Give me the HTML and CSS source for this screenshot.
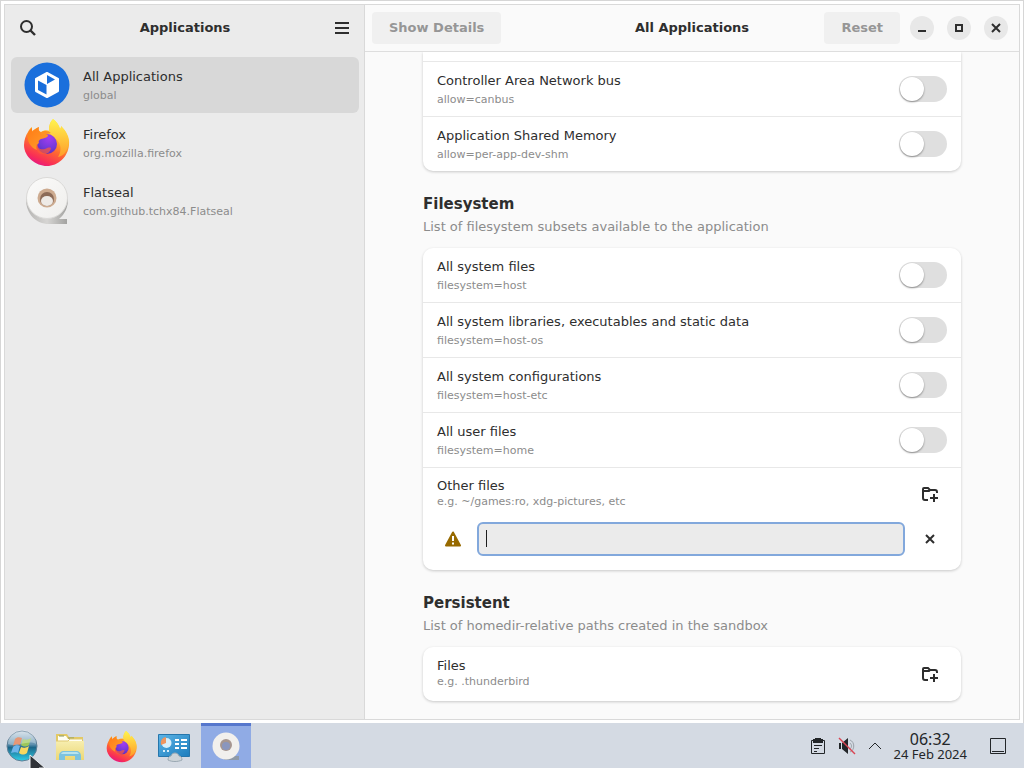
FILE: index.html
```html
<!DOCTYPE html>
<html lang="en">
<head>
    <meta charset="UTF-8">
    <meta name="viewport" content="width=device-width, initial-scale=1.0">
    <title>Flatseal</title>
    <link rel="stylesheet" href="styles.css">
</head>
<body>
    <!-- Shared icons -->
    <svg class="sprites" aria-hidden="true">
        <defs>
            <linearGradient id="foxBody" x1="0.75" y1="0" x2="0.3" y2="1">
                <stop offset="0" stop-color="#fff14a"/>
                <stop offset="0.35" stop-color="#ffb52b"/>
                <stop offset="0.6" stop-color="#ff6a30"/>
                <stop offset="0.85" stop-color="#f92f55"/>
                <stop offset="1" stop-color="#e31587"/>
            </linearGradient>
            <linearGradient id="foxHead" x1="0" y1="0" x2="1" y2="1">
                <stop offset="0" stop-color="#ff7a16"/>
                <stop offset="1" stop-color="#ffa02c"/>
            </linearGradient>
            <radialGradient id="foxGlobe" cx="0.6" cy="0.2" r="0.9">
                <stop offset="0" stop-color="#a23df0"/>
                <stop offset="0.6" stop-color="#7139d8"/>
                <stop offset="1" stop-color="#5b2bb0"/>
            </radialGradient>
            <linearGradient id="foxTail" x1="0" y1="0" x2="0" y2="1">
                <stop offset="0" stop-color="#fff44f"/>
                <stop offset="1" stop-color="#ff9c29"/>
            </linearGradient>
            <linearGradient id="orb" x1="0" y1="0" x2="0" y2="1">
                <stop offset="0" stop-color="#c9d7e2"/>
                <stop offset="0.45" stop-color="#5d8fae"/>
                <stop offset="0.55" stop-color="#1c6689"/>
                <stop offset="1" stop-color="#2fd0ea"/>
            </linearGradient>
            <linearGradient id="roll" x1="0" y1="0" x2="1" y2="1">
                <stop offset="0" stop-color="#fbfbfa"/>
                <stop offset="1" stop-color="#efeeec"/>
            </linearGradient>
            <linearGradient id="tape" x1="0" y1="0" x2="1" y2="0">
                <stop offset="0" stop-color="#b5b4b2"/>
                <stop offset="0.5" stop-color="#d6d5d3"/>
                <stop offset="1" stop-color="#a0a09e"/>
            </linearGradient>
            <linearGradient id="screen" x1="0" y1="0" x2="1" y2="1">
                <stop offset="0" stop-color="#5cb4e6"/>
                <stop offset="1" stop-color="#1d7dbd"/>
            </linearGradient>
            <linearGradient id="folder" x1="0" y1="0" x2="0" y2="1">
                <stop offset="0" stop-color="#f7eeb0"/>
                <stop offset="1" stop-color="#ecd774"/>
            </linearGradient>
        </defs>
        <symbol id="firefox" viewBox="0 0 48 48">
            <path fill="url(#foxBody)" d="M30 0c4 3 6 6 7 10 1-1 1-2 1-3 5 5 9 11 8 19-1 12-11 21-22 21S1 38 1 26c0-5 2-10 4-13 1-2 2-4 4-5v4c2-1 4-3 7-4-1 3 0 4 2 5 3-2 6-2 9-1-2-4 0-9 3-12z"/>
            <path fill="url(#foxTail)" d="M30 0c4 3 6 6 7 10 1-1 1-2 1-3 5 5 9 12 7 20-1 6-5 10-10 11 4-6 3-13-1-17-4-4-8-5-8-10 0-4 1-8 4-11z"/>
            <circle cx="24" cy="25" r="10" fill="url(#foxGlobe)"/>
            <path fill="url(#foxHead)" d="M5 14c1-2 2-4 4-5v4c2-2 4-4 7-5-1 3 0 5 3 6s5 1 6 2c0 3-4 3-7 4-2 1-3 2-2 4-2 1-3 4-2 7-6-2-11-9-9-17z"/>
            <path fill="#ff5a37" d="M14 25c1 5 4 6 8 5 2-1 4-2 6-1-1 5-5 7-9 6-4 0-7-5-5-10z" opacity=".7"/>
            <path fill="#ff9224" d="M17 14c4-3 8-2 11 0-3 0-5 1-6 3z"/>
        </symbol>
        <symbol id="folder-new" viewBox="0 0 16 16">
            <path fill="none" stroke="#2e2e2e" stroke-width="2" d="M6 14H3a2 2 0 0 1-2-2V3a1 1 0 0 1 1-1h4l2 2h5a2 2 0 0 1 2 2v1M1 5h6l1-1M12 8v8M8 12h8"/>
        </symbol>
        <symbol id="cross" viewBox="0 0 16 16">
            <path fill="none" stroke="#2e2e2e" stroke-width="2" d="M4 4l8 8M12 4l-8 8"/>
        </symbol>
    </svg>

    <div class="window">
        <aside class="sidebar">
            <header class="sidebar-header">
                <button type="button" class="icon-button" aria-label="Search">
                    <svg width="16" height="16" viewBox="0 0 16 16"><circle cx="6.500" cy="6.500" r="5.500" fill="none" stroke="#2e2e2e" stroke-width="2"/><path d="M10 10l5 5" stroke="#2e2e2e" stroke-width="2.400"/></svg>
                </button>
                <h1 class="title">Applications</h1>
                <button type="button" class="icon-button" aria-label="Main menu">
                    <svg width="16" height="16" viewBox="0 0 16 16"><path d="M1 3h14M1 8h14M1 13h14" stroke="#2e2e2e" stroke-width="2"/></svg>
                </button>
            </header>
            <nav class="app-list">
                <a href="#" class="app selected">
                    <svg width="48" height="48" viewBox="0 0 48 48">
                        <circle cx="24" cy="24" r="22.500" fill="#1a6fdc"/>
                        <path fill="#fff" stroke="#fff" stroke-width="2" stroke-linejoin="round" d="M24 12l11 6v12l-11 6-11-6V18z"/>
                        <path fill="#1a6fdc" d="M15 19.500l8.500 4.500v9.500L15 29zM24 14l8 4.500-8 4.500z"/>
                    </svg>
                    <span class="row-text"><span class="row-title">All Applications</span><span class="row-subtitle">global</span></span>
                </a>
                <a href="#" class="app">
                    <svg width="48" height="48"><use href="#firefox"/></svg>
                    <span class="row-text"><span class="row-title">Firefox</span><span class="row-subtitle">org.mozilla.firefox</span></span>
                </a>
                <a href="#" class="app">
                    <svg width="48" height="48" viewBox="0 0 48 48">
                        <path fill="url(#tape)" d="M3 22h42c0 8-3 15-9 20h8v5H26C13 47 3 37 3 22z"/>
                        <ellipse cx="24" cy="21" rx="20.500" ry="20.500" fill="url(#roll)" stroke="#dad9d7"/>
                        <circle cx="24" cy="21" r="9.500" fill="#cdab90"/>
                        <circle cx="24" cy="22" r="7" fill="#8c6b58"/>
                        <ellipse cx="24" cy="24" rx="6" ry="5" fill="#eeeae6"/>
                    </svg>
                    <span class="row-text"><span class="row-title">Flatseal</span><span class="row-subtitle">com.github.tchx84.Flatseal</span></span>
                </a>
            </nav>
        </aside>

        <main class="content">
            <header class="content-header">
                <div class="header-start">
                    <button type="button" class="text-button" disabled>Show Details</button>
                </div>
                <h1 class="title">All Applications</h1>
                <div class="header-end">
                    <button type="button" class="text-button" disabled>Reset</button>
                    <div class="window-controls">
                        <button type="button" class="round-button" aria-label="Minimize"><svg width="16" height="16" viewBox="0 0 16 16"><path d="M4 11h8" stroke="#2e2e2e" stroke-width="2"/></svg></button>
                        <button type="button" class="round-button" aria-label="Maximize"><svg width="16" height="16" viewBox="0 0 16 16"><path d="M5 5h6v6H5z" fill="none" stroke="#2e2e2e" stroke-width="2"/></svg></button>
                        <button type="button" class="round-button" aria-label="Close"><svg width="16" height="16"><use href="#cross"/></svg></button>
                    </div>
                </div>
            </header>

            <div class="scroller">
                <div class="page">
                    <div class="card card-continued">
                        <div class="row">
                            <label class="row-text" for="canbus"><span class="row-title">Controller Area Network bus</span><span class="row-subtitle">allow=canbus</span></label>
                            <input type="checkbox" class="switch" id="canbus">
                        </div>
                        <div class="row">
                            <label class="row-text" for="devShm"><span class="row-title">Application Shared Memory</span><span class="row-subtitle">allow=per-app-dev-shm</span></label>
                            <input type="checkbox" class="switch" id="devShm">
                        </div>
                    </div>

                    <section class="group">
                        <h2>Filesystem</h2>
                        <p>List of filesystem subsets available to the application</p>
                        <div class="card">
                            <div class="row">
                                <label class="row-text" for="host"><span class="row-title">All system files</span><span class="row-subtitle">filesystem=host</span></label>
                                <input type="checkbox" class="switch" id="host">
                            </div>
                            <div class="row">
                                <label class="row-text" for="hostOs"><span class="row-title">All system libraries, executables and static data</span><span class="row-subtitle">filesystem=host-os</span></label>
                                <input type="checkbox" class="switch" id="hostOs">
                            </div>
                            <div class="row">
                                <label class="row-text" for="hostEtc"><span class="row-title">All system configurations</span><span class="row-subtitle">filesystem=host-etc</span></label>
                                <input type="checkbox" class="switch" id="hostEtc">
                            </div>
                            <div class="row">
                                <label class="row-text" for="home"><span class="row-title">All user files</span><span class="row-subtitle">filesystem=home</span></label>
                                <input type="checkbox" class="switch" id="home">
                            </div>
                            <div class="row row-compact">
                                <label class="row-text" for="otherPath"><span class="row-title">Other files</span><span class="row-subtitle">e.g. ~/games:ro, xdg-pictures, etc</span></label>
                                <button type="button" class="icon-button" aria-label="Add path"><svg width="16" height="16"><use href="#folder-new"/></svg></button>
                            </div>
                            <div class="path-row">
                                <svg class="warning" width="16" height="16" viewBox="0 0 16 16">
                                    <path fill="#976a00" stroke="#976a00" stroke-width="2" stroke-linejoin="round" d="M8 1.500L15 14.500H1z"/>
                                    <path stroke="#fff" stroke-width="2" d="M8 5v5M8 11.500v2"/>
                                </svg>
                                <div class="entry">
                                    <input type="text" id="otherPath">
                                    <span class="caret"></span>
                                </div>
                                <button type="button" class="icon-button" aria-label="Remove path"><svg width="16" height="16"><use href="#cross"/></svg></button>
                            </div>
                        </div>
                    </section>

                    <section class="group">
                        <h2>Persistent</h2>
                        <p>List of homedir-relative paths created in the sandbox</p>
                        <div class="card">
                            <div class="row row-compact">
                                <div class="row-text"><span class="row-title">Files</span><span class="row-subtitle">e.g. .thunderbird</span></div>
                                <button type="button" class="icon-button" aria-label="Add path"><svg width="16" height="16"><use href="#folder-new"/></svg></button>
                            </div>
                        </div>
                    </section>
                </div>
            </div>
        </main>
    </div>

    <footer class="taskbar">
        <button type="button" class="start" aria-label="Start">
            <svg width="32" height="32" viewBox="0 0 32 32">
                <circle cx="16" cy="16" r="15" fill="url(#orb)" stroke="#5f7f96"/>
                <path fill="#dd6b3a" d="M9 9c2-2 4-2 7-1l-2 7c-2-1-4-1-7 1z"/>
                <path fill="#9bc65a" d="M17 9c3 1 5 1 8-1l-2 7c-3 2-5 2-8 0z"/>
                <path fill="#6db4ea" d="M7 17c2-2 5-2 7-1l-2 7c-2-1-4-1-7 0z"/>
                <path fill="#f8d860" d="M15 17c3 1 5 1 8-1l-2 7c-3 2-5 2-8 0z"/>
                <path fill="#fff" opacity=".3" d="M2 14a14 14 0 0 1 28 0C22 9 11 18 2 14z"/>
            </svg>
            <svg class="pointer" width="16" height="24" viewBox="0 0 16 24"><path fill="#303338" stroke="#eceff2" d="M1 1v19l5-5 3 7 4-2-3-6h6z"/></svg>
        </button>
        <button type="button" class="task" aria-label="Files">
            <svg width="30" height="30" viewBox="0 0 30 30">
                <path fill="#e3c965" d="M1 2h11l2 3h14v22H1z"/>
                <path fill="#fffef2" d="M3 4h8l2 3h14v4H3z"/>
                <path stroke="#8b9a64" stroke-width="1" d="M4 4h5M13 6h6"/>
                <path fill="url(#folder)" d="M1 9h28v19H1z"/>
                <path fill="none" stroke="#dfc972" d="M1 9h12l2-2h13"/>
                <path fill="#7cc3df" d="M4 28v-4c0-3 2-5 5-5h12c3 0 5 2 5 5v4h-6v-4H10v4z"/>
                <path fill="#b9e4ee" d="M6 22c1-2 2-2 4-2h10c2 0 3 0 4 2z"/>
            </svg>
        </button>
        <button type="button" class="task" aria-label="Firefox">
            <svg width="32" height="32"><use href="#firefox"/></svg>
        </button>
        <button type="button" class="task" aria-label="System settings">
            <svg width="34" height="30" viewBox="0 0 34 30">
                <path fill="url(#screen)" stroke="#2676ac" d="M1.500 2.500h31v22h-31z"/>
                <circle cx="9.500" cy="11" r="5" fill="#d7eefa"/>
                <path fill="#ee955f" d="M9 11V5a6 6 0 0 0-5 8z"/>
                <path stroke="#fff" stroke-width="2" d="M18 8h4M24 8h6M18 12h4M24 12h6M18 16h4M24 16h6"/>
                <path stroke="#d7eefa" stroke-width="2" d="M6 19h2M10 19h2"/>
                <path fill="#cdd4d9" stroke="#9aa8b2" d="M11 28c0-2 1-4 3-4 1-4 7-4 8 0 2 0 3 2 3 4-4 2-10 2-14 0z"/>
            </svg>
        </button>
        <button type="button" class="task active" aria-label="Flatseal">
            <svg width="32" height="32" viewBox="0 0 32 32">
                <path fill="#8f9aa8" d="M16 25h13v4H14z"/>
                <circle cx="16" cy="15" r="13.500" fill="#f2f0ed"/>
                <circle cx="16" cy="14" r="6" fill="#a69690"/>
                <circle cx="16" cy="15" r="4" fill="#8a96bd"/>
            </svg>
        </button>

        <div class="tray">
            <svg width="16" height="18" viewBox="0 0 16 18"><path fill="none" stroke="#232629" d="M1.500 3.500h13v13h-13z"/><path fill="#232629" d="M3 2h2V1h6v1h2v4H3z"/><path stroke="#232629" d="M4 8.500h8M4 11.500h5M4 14.500h3"/></svg>
            <svg width="18" height="18" viewBox="0 0 18 18"><path fill="#232629" d="M1 6h2v6H1zM4 6l6-5v16l-6-5z"/><path fill="none" stroke="#9aa1a9" d="M12 6c2 2 2 4 0 6M12 3c5 2 5 10 0 12"/><path stroke="#da4453" stroke-width="1.500" d="M1 1l16 16"/></svg>
            <svg width="14" height="18" viewBox="0 0 14 18"><path fill="none" stroke="#232629" d="M1 12l6-6 6 6"/></svg>
            <time class="clock" datetime="2024-02-24T06:32"><span class="hour">06:32</span><span class="date">24 Feb 2024</span></time>
            <svg width="16" height="16" viewBox="0 0 16 16"><path fill="none" stroke="#232629" d="M.5.500h15v15H.5zM2 13.500h12"/></svg>
        </div>
    </footer>
</body>
</html>
```
FILE: styles.css
```css
* {
    box-sizing: border-box;
}
body {
    margin: 0;
    height: 100vh;
    display: flex;
    flex-direction: column;
    overflow: hidden;
    font-family: "DejaVu Sans", sans-serif;
    font-size: 13px;
    color: #2e2e2e;
}
button {
    padding: 0;
    border: none;
    background: none;
    font: inherit;
    color: inherit;
}
svg {
    display: block;
    flex: none;
}
h1, h2, p {
    margin: 0;
}
.sprites {
    position: absolute;
    width: 0;
    height: 0;
}

/* Window */
.window {
    flex: 1;
    min-height: 0;
    display: flex;
    padding: 3px;
    border: 1px solid #d6d6d6;
    border-bottom: none;
    background: white;
}
.sidebar {
    flex: none;
    width: 361px;
    background: #ebebeb;
    border: 1px solid #d9d9d9;
}
.sidebar-header {
    display: flex;
    align-items: center;
    justify-content: space-between;
    height: 46px;
    padding: 0 5px 0 6px;
}
.title {
    font-size: 13px;
    line-height: 20px;
    font-weight: bold;
}
.icon-button {
    width: 34px;
    height: 34px;
    flex: none;
    display: flex;
    align-items: center;
    justify-content: center;
}
.app-list {
    display: flex;
    flex-direction: column;
    gap: 2px;
    padding: 6px 5px 6px 6px;
}
.app {
    display: flex;
    align-items: center;
    gap: 12px;
    height: 56px;
    padding: 0 12px;
    border-radius: 6px;
    color: inherit;
    text-decoration: none;
}
.app.selected {
    background: #d8d8d8;
}
.row-text {
    flex: 1;
    display: flex;
    flex-direction: column;
    gap: 3px;
    padding-top: 2px;
}
.row-title {
    font-size: 13px;
    line-height: 16px;
}
.row-subtitle {
    font-size: 11px;
    line-height: 16px;
    color: #8c8c8c;
}

/* Permissions pane */
.content {
    flex: 1;
    min-width: 0;
    display: flex;
    flex-direction: column;
    background: #fafafa;
    border: 1px solid #d9d9d9;
    border-left: none;
}
.content-header {
    flex: none;
    display: grid;
    grid-template-columns: 1fr auto 1fr;
    align-items: center;
    height: 47px;
    padding: 0 7px;
    border-bottom: 1px solid #dedede;
}
.header-end {
    display: flex;
    align-items: center;
    justify-content: flex-end;
    gap: 10px;
    padding-right: 4px;
}
.text-button {
    height: 32px;
    padding: 0 17px 2px;
    border-radius: 4px;
    background: #f0f0f0;
    color: #969696;
    font-weight: bold;
}
.window-controls {
    display: flex;
    gap: 13px;
}
.round-button {
    width: 24px;
    height: 24px;
    display: flex;
    align-items: center;
    justify-content: center;
    border-radius: 50%;
    background: #e8e8e8;
}
.scroller {
    flex: 1;
    min-height: 0;
    overflow: hidden;
    padding: 0 24px;
}
.page {
    max-width: 538px;
    margin: 0 auto;
}
.card {
    background: white;
    border-radius: 10px;
    box-shadow: 0 1px 3px rgba(0,0,0,0.2);
}
.card-continued {
    padding-top: 9px;
    border-top-left-radius: 0;
    border-top-right-radius: 0;
}
.row {
    display: flex;
    align-items: center;
    height: 54px;
    padding: 0 14px;
}
.row + .row, .card-continued .row {
    height: 55px;
    border-top: 1px solid #e8e8e8;
}
.row + .row-compact {
    height: 52px;
}
.row-compact .row-text {
    gap: 0;
    padding-top: 0;
}
.group {
    padding-top: 23px;
}
.group h2 {
    font-size: 15px;
    line-height: 20px;
}
.group p {
    line-height: 18px;
    margin: 4px 0 12px;
    color: #8c8c8c;
}
.switch {
    appearance: none;
    flex: none;
    width: 48px;
    height: 26px;
    margin: 0;
    padding: 1px;
    border-radius: 13px;
    background: #dfdfdf;
}
.switch::before {
    content: "";
    display: block;
    width: 24px;
    height: 24px;
    border-radius: 50%;
    background: white;
    box-shadow: 0 1px 2px rgba(0,0,0,0.4);
}
.switch:checked {
    background: #3584e4;
}
.switch:checked::before {
    margin-left: auto;
}
.path-row {
    display: flex;
    align-items: center;
    height: 51px;
    padding: 0 14px 12px;
}
.warning {
    margin: 0 16px 0 8px;
}
.entry {
    position: relative;
    flex: 1;
    margin-right: 8px;
}
.entry input {
    display: block;
    width: 100%;
    height: 34px;
    padding: 0 8px;
    border: 2px solid #82a8dc;
    border-radius: 6px;
    background: #ebebeb;
    font: inherit;
}
.caret {
    position: absolute;
    left: 9px;
    top: 8px;
    width: 1px;
    height: 17px;
    background: #1e1e1e;
}

/* Taskbar */
.taskbar {
    flex: none;
    display: flex;
    gap: 2px;
    height: 45px;
    background: #d4dae3;
}
.start, .task {
    display: flex;
    align-items: center;
    justify-content: center;
}
.start {
    position: relative;
    width: 43px;
}
.task {
    width: 50px;
    border-top: 3px solid transparent;
}
.task.active {
    background: #90abe5;
    border-top-color: #5677cd;
}
.pointer {
    position: absolute;
    left: 29px;
    top: 31px;
}
.tray {
    display: flex;
    align-items: center;
    gap: 12px;
    margin-left: auto;
    padding-right: 18px;
}
.clock {
    display: flex;
    flex-direction: column;
    align-items: center;
    padding-right: 11px;
    font-family: "Noto Sans", sans-serif;
    color: #232629;
}
.hour {
    font-size: 16px;
    line-height: 16px;
}
.date {
    font-size: 13px;
    line-height: 14px;
}
```
